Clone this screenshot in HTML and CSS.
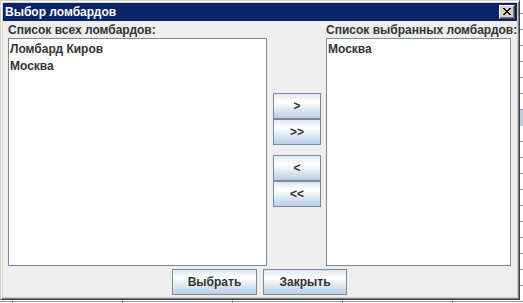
FILE: index.html
```html
<!DOCTYPE html>
<html lang="ru">
  <head>
    <meta charset="UTF-8" />
    <meta name="viewport" content="width=device-width, initial-scale=1.0" />
    <title>Выбор ломбардов</title>
    <link rel="stylesheet" href="styles.css">
  </head>
  <body>
    <div class="window">
      <div class="title-bar">
        <span class="title">Выбор ломбардов</span>
        <button type="button" class="close-btn" aria-label="Закрыть">
          <svg width="8" height="7" viewBox="0 0 8 7" shape-rendering="crispEdges">
            <path fill="#000" d="M0 0h2v1H0z M6 0h2v1H6z M1 1h2v1H1z M5 1h2v1H5z M2 2h4v1H2z M3 3h2v1H3z M2 4h4v1H2z M1 5h2v1H1z M5 5h2v1H5z M0 6h2v1H0z M6 6h2v1H6z" />
          </svg>
        </button>
      </div>

      <div class="content">
        <div class="lists">
          <!-- Список всех ломбардов -->
          <div class="list-column all">
            <label class="list-label">Список всех ломбардов:</label>
            <ul class="list">
              <li>Ломбард Киров</li>
              <li>Москва</li>
            </ul>
          </div>

          <!-- Кнопки переноса -->
          <div class="transfer">
            <div class="button-group">
              <button type="button" class="swing-btn arrow-btn">&gt;</button>
              <button type="button" class="swing-btn arrow-btn">&gt;&gt;</button>
            </div>
            <div class="button-group">
              <button type="button" class="swing-btn arrow-btn">&lt;</button>
              <button type="button" class="swing-btn arrow-btn">&lt;&lt;</button>
            </div>
          </div>

          <!-- Список выбранных ломбардов -->
          <div class="list-column selected">
            <label class="list-label">Список выбранных ломбардов:</label>
            <ul class="list">
              <li>Москва</li>
            </ul>
          </div>
        </div>

        <div class="actions">
          <button type="button" class="swing-btn choose-btn">Выбрать</button>
          <button type="button" class="swing-btn close-action-btn">Закрыть</button>
        </div>
      </div>
    </div>
  </body>
</html>
```

FILE: styles.css
```css
* {
  box-sizing: border-box;
  margin: 0;
  padding: 0;
  font-family: "Liberation Sans", Arial, sans-serif;
}

/* таблица главного окна, видна только по краям диалога */
body {
  width: 523px;
  height: 303px;
  overflow: hidden;
  background-color: #fff;
  background-image:
    repeating-linear-gradient(
      to right,
      transparent 0,
      transparent 12px,
      #8a99a6 12px,
      #8a99a6 13px,
      transparent 13px,
      transparent 110px
    ),
    linear-gradient(#b8cfe5, #b8cfe5),
    repeating-linear-gradient(
      to bottom,
      transparent 0,
      transparent 13px,
      #8a99a6 13px,
      #8a99a6 14px,
      transparent 14px,
      transparent 16px
    );
  background-position: 0 300px, 0 110px, 0 0;
  background-size: 100% 3px, 100% 16px, auto;
  background-repeat: no-repeat, no-repeat, repeat;
}

.window {
  width: 520px;
  height: 300px;
  display: flex;
  flex-direction: column;
  padding: 2px;
  background-color: #d4d0c8;
  border: 1px solid;
  border-color: #d4d0c8 #404040 #404040 #d4d0c8;
  box-shadow: inset 1px 1px #fff, inset -1px -1px #808080;
}

.title-bar {
  height: 18px;
  display: flex;
  align-items: center;
  justify-content: space-between;
  padding: 0 2px;
  background-color: #0a246a;
}

.title {
  color: #fff;
  font-size: 12px;
  font-weight: bold;
}

.close-btn {
  width: 16px;
  height: 14px;
  display: flex;
  justify-content: center;
  align-items: flex-start;
  padding-top: 2px;
  background-color: #d4d0c8;
  border: 1px solid;
  border-color: #fff #404040 #404040 #fff;
  box-shadow: inset -1px -1px #808080;
}

.close-btn svg {
  display: block;
}

.content {
  flex: 1;
  display: flex;
  flex-direction: column;
  padding: 1px 6px 2px 5px;
  background-color: #eeeeee;
}

.lists {
  display: flex;
  height: 244px;
}

.list-column.all {
  width: 259px;
}

.list-column.selected {
  width: 185px;
}

.list-label {
  display: block;
  height: 16px;
  line-height: 16px;
  font-size: 12px;
  font-weight: bold;
  color: #333;
  white-space: nowrap;
}

.list {
  height: 228px;
  list-style: none;
  padding: 2px 1px;
  background-color: #fff;
  border: 1px solid #7a8a99;
}

.list li {
  line-height: 17px;
  font-size: 12px;
  font-weight: bold;
  color: #333;
}

.transfer {
  width: 59px;
  display: flex;
  flex-direction: column;
  gap: 10px;
  padding: 71px 0 0 6px;
}

.button-group {
  display: flex;
  flex-direction: column;
}

.swing-btn {
  height: 26px;
  font-size: 12px;
  font-weight: bold;
  color: #333;
  border: 1px solid #7a8a99;
  background: linear-gradient(
    to bottom,
    #dde8f3 0%,
    #fff 30%,
    #fff 35%,
    #dde8f3 65%,
    #b8cfe5 100%
  );
}

.arrow-btn {
  width: 48px;
}

.actions {
  display: flex;
  justify-content: center;
  gap: 6px;
  margin-top: 3px;
}

.choose-btn {
  width: 85px;
}

.close-action-btn {
  width: 84px;
}
```
